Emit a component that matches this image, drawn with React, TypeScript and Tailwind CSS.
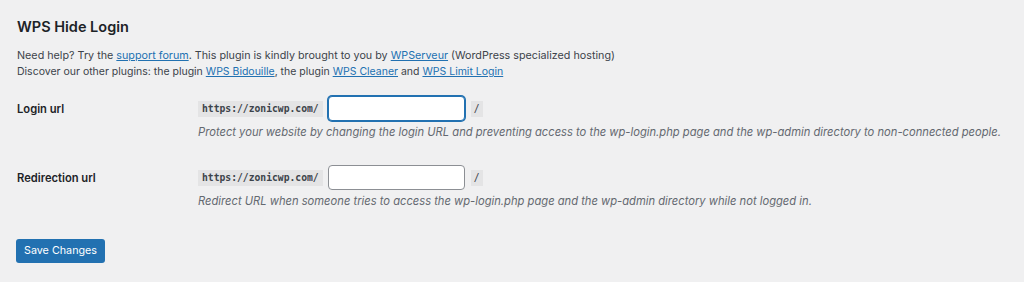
import React from "react";

const font = { fontFamily: "Inter, 'Liberation Sans', sans-serif" };
const mono = { fontFamily: "'DejaVu Sans Mono', monospace" };

function Row({ label, desc, focused }: { label: string; desc: string; focused?: boolean }) {
  return (
    <div className="flex">
      <div className="w-[181px] shrink-0 pt-[6px] text-[11.2px] font-semibold leading-[15px] text-[#1d2327]">{label}</div>
      <div className="flex flex-col">
        <div className="flex items-center">
          <code className="bg-[#e4e4e5] px-[4px] py-[2px] text-[9.7px] font-semibold leading-[12px] text-[#3c434a]" style={mono}>
            https://zonicwp.com/
          </code>
          <div
            className={
              focused
                ? "ml-[5px] h-[25px] w-[137px] rounded-[4px] border border-[#2271b1] bg-white shadow-[0_0_0_1px_#2271b1]"
                : "ml-[5px] h-[25px] w-[137px] rounded-[4px] border border-[#8c8f94] bg-white"
            }
          />
          <code className="ml-[6px] bg-[#e4e4e5] px-[3px] py-[2px] text-[9.7px] leading-[12px] text-[#3c434a]" style={mono}>
            /
          </code>
        </div>
        <p className="mt-[4px] text-[11.2px] italic leading-[15px] text-[#646970]">{desc}</p>
      </div>
    </div>
  );
}

export default function App() {
  return (
    <div className="h-[282px] w-[1024px] bg-[#f0f0f1] pl-[17px] pt-[18px]" style={font}>
      <h1 className="text-[14.5px] font-semibold leading-[18px] text-[#1d2327]">WPS Hide Login</h1>
      <div className="mt-[12px] leading-[16px] text-[#3c434a]">
        <p className="text-[10.75px]">
          Need help? Try the <a className="text-[#2271b1] underline">support forum</a>. This plugin is kindly brought to you by{" "}
          <a className="text-[#2271b1] underline">WPServeur</a> (WordPress specialized hosting)
        </p>
        <p className="text-[10.5px]">
          Discover our other plugins: the plugin <a className="text-[#2271b1] underline">WPS Bidouille</a>, the plugin{" "}
          <a className="text-[#2271b1] underline">WPS Cleaner</a> and <a className="text-[#2271b1] underline">WPS Limit Login</a>
        </p>
      </div>
      <div className="mt-[16px] flex flex-col gap-[25px]">
        <Row
          label="Login url"
          focused
          desc="Protect your website by changing the login URL and preventing access to the wp-login.php page and the wp-admin directory to non-connected people."
        />
        <Row
          label="Redirection url"
          desc="Redirect URL when someone tries to access the wp-login.php page and the wp-admin directory while not logged in."
        />
      </div>
      <button className="ml-[-1px] mt-[30px] h-[24px] w-[89px] rounded-[3px] bg-[#2271b1] text-[10.75px] text-white">Save Changes</button>
    </div>
  );
}
